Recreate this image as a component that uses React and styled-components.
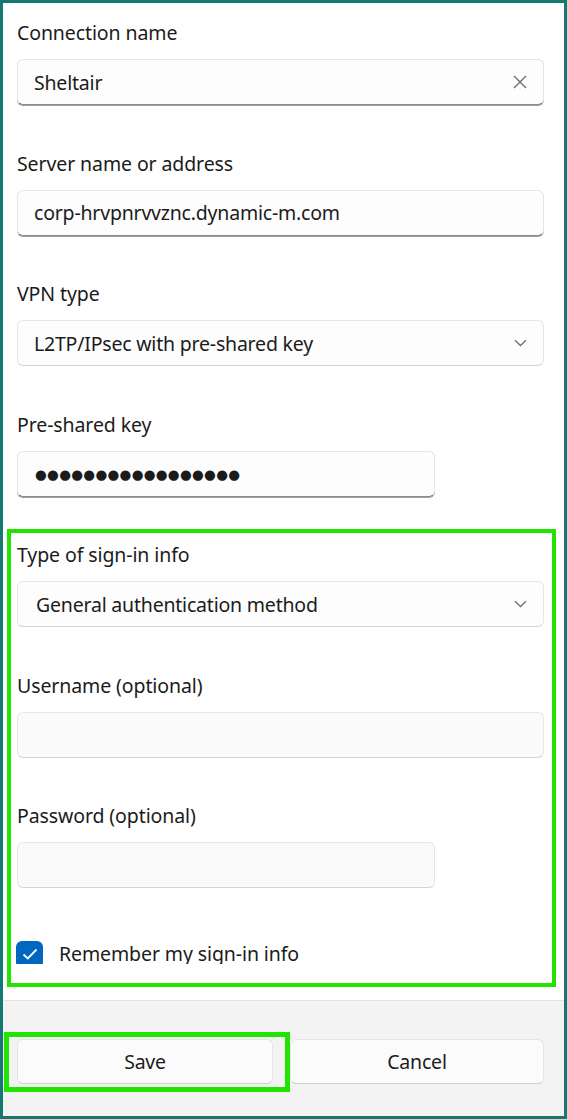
import React from 'react';
import styled, { createGlobalStyle } from 'styled-components';

const GlobalStyle = createGlobalStyle`
    body {
        margin: 0;
        font-family: "Noto Sans", "Open Sans", sans-serif;
        color: #1b1b1b;
    }
`;

const Frame = styled.div`
    position: relative;
    box-sizing: border-box;
    width: 567px;
    height: 1119px;
    border: 3px solid #127a71;
    background: #ffffff;
    display: flex;
    flex-direction: column;
`;

const Scroll = styled.div`
    height: 961px;
    overflow: hidden;
    padding: 16px 20px 0 14px;
    box-sizing: border-box;
    flex-shrink: 0;
`;

const Spacer = styled.div`
    height: 36px;
    flex-shrink: 0;
`;

const Field = styled.div`
    display: flex;
    flex-direction: column;
    margin-bottom: 44.5px;
`;

const Label = styled.div`
    font-size: 19.5px;
    line-height: 28px;
    margin-bottom: 12px;
    letter-spacing: -0.1px;
`;

const Box = styled.div`
    box-sizing: border-box;
    height: 46px;
    width: ${({ narrow }) => (narrow ? '418px' : '100%')};
    display: flex;
    align-items: center;
    justify-content: space-between;
    padding: 0 16px 0 ${({ inset }) => inset || 16}px;
    border: 1px solid #e6e6e6;
    border-bottom: 1px solid ${({ underline }) => underline || '#d4d4d4'};
    border-radius: 6px;
    background: ${({ empty }) => (empty ? '#fafafa' : '#fdfdfd')};
    font-size: 19.5px;
    letter-spacing: -0.2px;
    box-shadow: ${({ underline }) => (underline ? '0 1px 0 #a0a0a0' : 'none')};
`;

const Dots = styled.span`
    font-family: "DejaVu Sans", sans-serif;
    font-size: 13.5px;
    letter-spacing: 0.3px;
    color: #1b1b1b;
    padding-left: 1px;
`;

const IconButton = styled.span`
    display: flex;
    align-items: center;
    color: #7a7a7a;
`;

const CheckRow = styled.div`
    display: flex;
    align-items: center;
    gap: 16px;
    margin-top: 52px;
    margin-left: -1px;
`;

const CheckBox = styled.span`
    width: 27px;
    height: 27px;
    border-radius: 6px;
    background: #0067c0;
    display: flex;
    align-items: center;
    justify-content: center;
    flex-shrink: 0;
`;

const CheckLabel = styled.span`
    font-size: 19.5px;
    letter-spacing: -0.1px;
    line-height: 28px;
`;

const Footer = styled.div`
    flex: 1;
    border-top: 1px solid #e3e3e3;
    background: #f3f3f3;
    padding: 38px 20px 0 14px;
    display: grid;
    grid-template-columns: 256px 1fr;
    gap: 17px;
    align-content: start;
`;

const Button = styled.button`
    height: 45px;
    box-sizing: border-box;
    border: 1px solid #e5e5e5;
    border-bottom-color: #d0d0d0;
    border-radius: 6px;
    background: #fbfbfb;
    font-family: "Noto Sans", "Open Sans", sans-serif;
    font-size: 19.5px;
    letter-spacing: -0.2px;
    color: #1b1b1b;
`;

const Highlight = styled.div`
    position: absolute;
    left: ${({ x }) => x}px;
    top: ${({ y }) => y}px;
    width: ${({ w }) => w}px;
    height: ${({ h }) => h}px;
    box-sizing: border-box;
    border: ${({ thick }) => thick}px solid #22e400;
    pointer-events: none;
`;

const Clear = () => (
    <svg width="14" height="14" viewBox="0 0 14 14">
        <path d="M1 1 L13 13 M13 1 L1 13" stroke="#6e6e6e" strokeWidth="1.4" fill="none" />
    </svg>
);

const Chevron = () => (
    <svg width="13" height="8" viewBox="0 0 13 8">
        <path d="M1 1.2 L6.5 6.5 L12 1.2" stroke="#6e6e6e" strokeWidth="1.3" fill="none" />
    </svg>
);

const Tick = () => (
    <svg width="16" height="12" viewBox="0 0 16 12">
        <path d="M1.5 6.5 L5.8 10.5 L14.5 1.5" stroke="#ffffff" strokeWidth="1.8" fill="none" />
    </svg>
);

const App = () => (
    <>
        <GlobalStyle />
        <Frame>
            <Scroll>
                <Field>
                    <Label>Connection name</Label>
                    <Box underline="#8a8a8a">
                        <span>Sheltair</span>
                        <IconButton><Clear /></IconButton>
                    </Box>
                </Field>
                <Field>
                    <Label>Server name or address</Label>
                    <Box underline="#8a8a8a">
                        <span>corp-hrvpnrvvznc.dynamic-m.com</span>
                    </Box>
                </Field>
                <Field>
                    <Label>VPN type</Label>
                    <Box>
                        <span>L2TP/IPsec with pre-shared key</span>
                        <IconButton><Chevron /></IconButton>
                    </Box>
                </Field>
                <Field>
                    <Label>Pre-shared key</Label>
                    <Box narrow underline="#8a8a8a">
                        <Dots>●●●●●●●●●●●●●●●●●</Dots>
                    </Box>
                </Field>
                <Field>
                    <Label>Type of sign-in info</Label>
                    <Box inset={18}>
                        <span>General authentication method</span>
                        <IconButton><Chevron /></IconButton>
                    </Box>
                </Field>
                <Field>
                    <Label>Username (optional)</Label>
                    <Box empty />
                </Field>
                <Field>
                    <Label>Password (optional)</Label>
                    <Box narrow empty />
                </Field>
                <CheckRow>
                    <CheckBox><Tick /></CheckBox>
                    <CheckLabel>Remember my sign-in info</CheckLabel>
                </CheckRow>
            </Scroll>
            <Spacer />
            <Footer>
                <Button>Save</Button>
                <Button>Cancel</Button>
            </Footer>
            <Highlight x={4} y={526} w={549} h={458} thick={4.5} />
            <Highlight x={1} y={1029} w={286} h={60} thick={5.5} />
        </Frame>
    </>
);

export default App;
